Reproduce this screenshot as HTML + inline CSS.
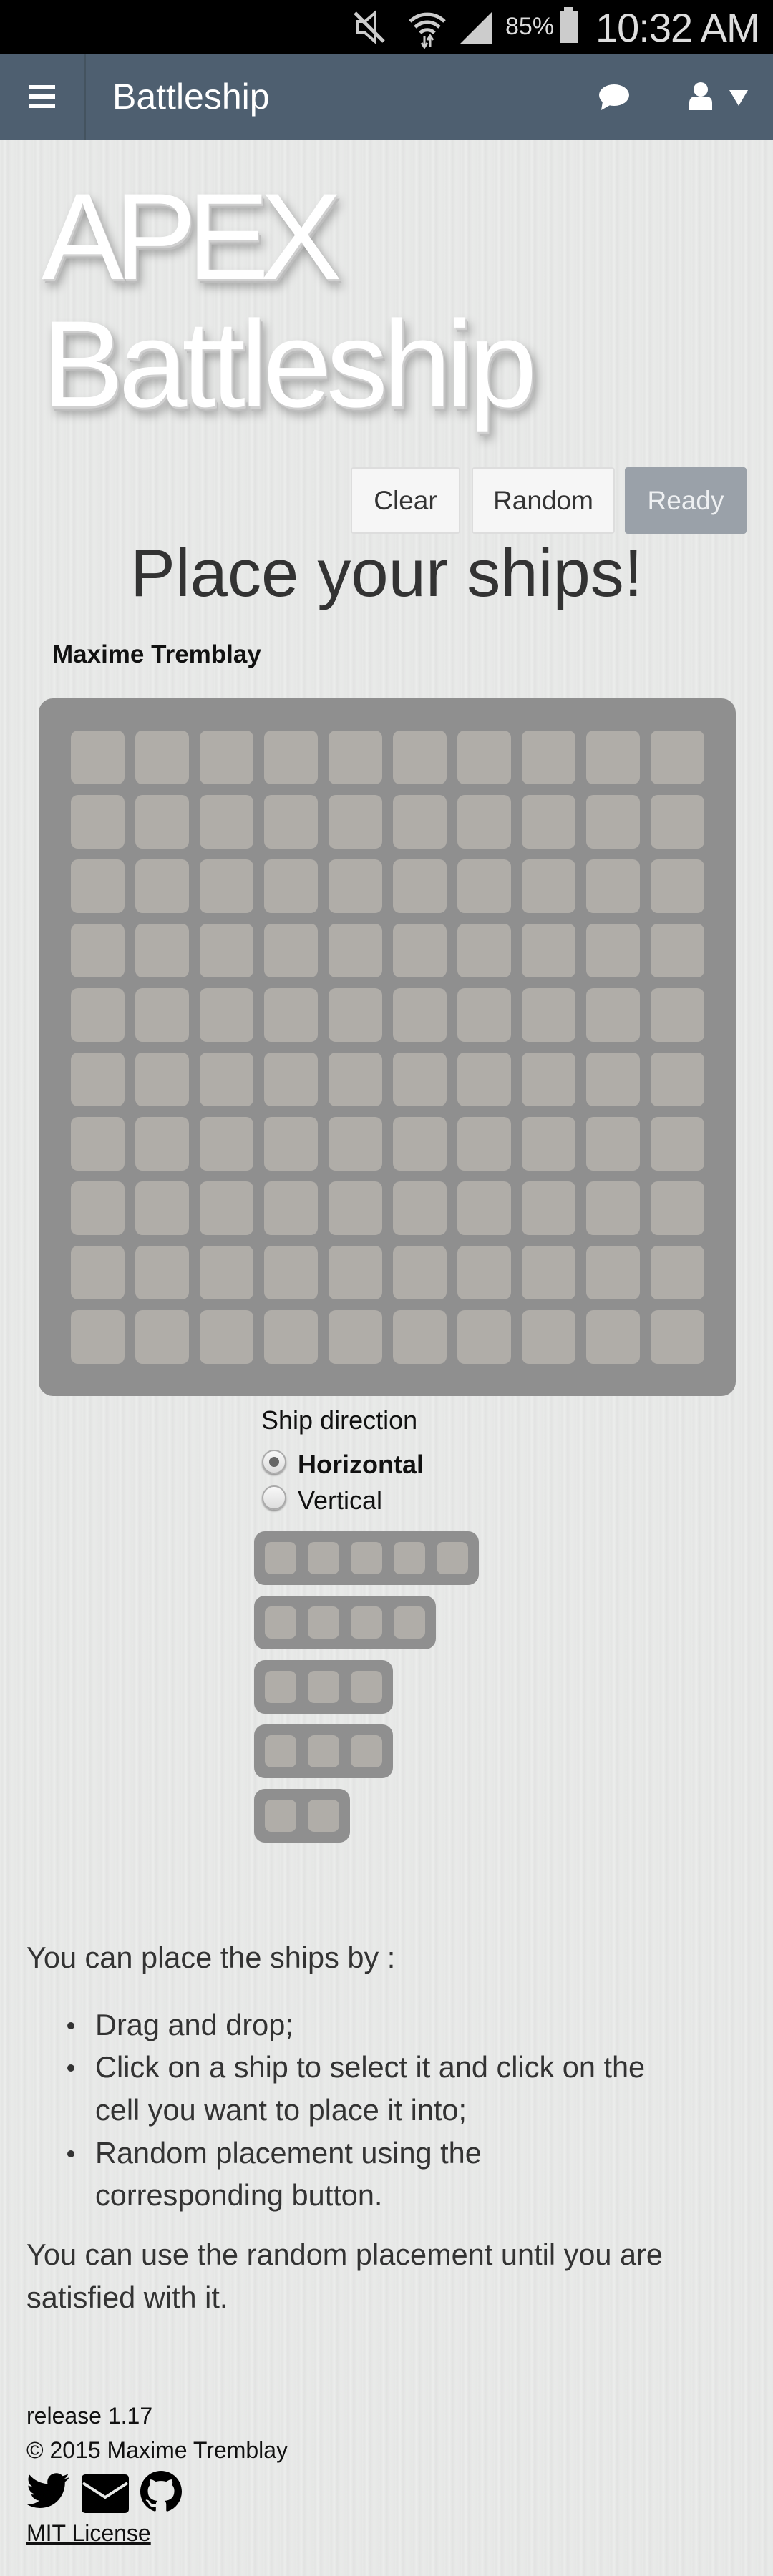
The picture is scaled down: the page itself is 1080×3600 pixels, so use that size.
<!DOCTYPE html>
<html><head><meta charset="utf-8"><style>
*{margin:0;padding:0;box-sizing:border-box}
body{width:1080px;height:3600px;overflow:hidden;font-family:"Liberation Sans",sans-serif;background:#e7e8e7;position:relative;color:#111}
.bg{position:absolute;left:0;top:0;width:1080px;height:3600px;background:repeating-linear-gradient(90deg,#e9eae9 0,#e4e5e4 3px,#ecedec 7px,#e2e3e2 11px,#e9eae9 16px,#e6e7e6 23px)}
.a{position:absolute}
.grid{position:absolute;left:99px;top:1021px;width:885px;height:885px;display:grid;grid-template-columns:repeat(10,75px);grid-template-rows:repeat(10,75px);gap:15px}
.grid div{background:#b0ada8;border-radius:10px}
.ship{position:absolute;left:355px;height:75px;background:#8f8f8f;border-radius:15px}
.sc{position:absolute;top:15px;width:44px;height:45px;background:#b0ada8;border-radius:9px}
.btn{position:absolute;top:653px;height:93px;border:2px solid #ddd;background:#f6f6f6;border-radius:4px;font-size:37px;color:#333;text-align:center;line-height:89px}
.li{position:absolute;left:133px;font-size:41.5px;color:#333;white-space:nowrap}
.dot{position:absolute;left:94px;width:10px;height:10px;border-radius:50%;background:#333}
.p{position:absolute;left:37px;font-size:41.5px;color:#333;white-space:nowrap}
.title{position:absolute;left:58px;color:#fff;font-size:172px;letter-spacing:-7px;line-height:1;text-shadow:2px 3px 0 #d0d0d0,4px 6px 0 #bdbdbd,6px 10px 14px rgba(0,0,0,.35)}
</style></head><body>
<div class="bg"></div>

<div class="a" style="left:0;top:0;width:1080px;height:76px;background:#000">
  <svg class="a" style="left:480px;top:10px" width="70" height="56"><path d="M20 20h10l14-12v40l-14-12H20z" fill="none" stroke="#ccc" stroke-width="4"/><path d="M16 8 L56 48" stroke="#ccc" stroke-width="5"/></svg>
  <svg class="a" style="left:567px;top:8px" width="60" height="62"><path d="M6 22a34 34 0 0 1 48 0M13 30a24 24 0 0 1 34 0M20 38a14 14 0 0 1 20 0" stroke="#ccc" stroke-width="5" fill="none"/><path d="M26 42v16M22 52l4 6 4-6M34 58V42M30 48l4-6 4 6" stroke="#ccc" stroke-width="3" fill="none"/></svg>
  <svg class="a" style="left:640px;top:14px" width="50" height="50"><polygon points="48,2 48,48 2,48" fill="#ccc"/></svg>
  <div class="a" style="left:706px;top:18px;font-size:34px;color:#ddd">85%</div>
  <div class="a" style="left:788px;top:10px;width:12px;height:6px;background:#ccc"></div>
  <div class="a" style="left:782px;top:16px;width:26px;height:44px;background:#ccc"></div>
  <div class="a" style="left:832px;top:6px;font-size:56px;color:#ddd;letter-spacing:-1px">10:32 AM</div>
</div>

<div class="a" style="left:0;top:76px;width:1080px;height:119px;background:#4e5f70">
  <div class="a" style="left:118px;top:0;width:2px;height:119px;background:#44535f"></div>
  <div class="a" style="left:41px;top:43px;width:36px;height:6px;background:#fff"></div>
  <div class="a" style="left:41px;top:56px;width:36px;height:6px;background:#fff"></div>
  <div class="a" style="left:41px;top:69px;width:36px;height:6px;background:#fff"></div>
  <div class="a" style="left:157px;top:30px;font-size:50px;color:#fff">Battleship</div>
  <svg class="a" style="left:836px;top:40px" width="44" height="40"><ellipse cx="22" cy="17" rx="21" ry="15" fill="#fff"/><path d="M6 26 L4 38 L18 30z" fill="#fff"/></svg>
  <svg class="a" style="left:962px;top:38px" width="34" height="40"><circle cx="17" cy="11" r="10" fill="#fff"/><path d="M1 40 V30 Q1 21 10 21 H24 Q33 21 33 30 V40z" fill="#fff"/></svg>
  <svg class="a" style="left:1019px;top:50px" width="26" height="22"><polygon points="0,0 26,0 13,22" fill="#fff"/></svg>
</div>

<div class="title" style="top:245px;letter-spacing:-13px">APEX</div>
<div class="title" style="top:423px">Battleship</div>

<div class="btn" style="left:490px;width:153px">Clear</div>
<div class="btn" style="left:659px;width:200px">Random</div>
<div class="btn" style="left:873px;width:170px;background:#9aa1a9;border-color:#9aa1a9;color:#eef0f2">Ready</div>

<div class="a" style="left:0;width:1080px;top:747px;text-align:center;font-size:94px;color:#333">Place your ships!</div>
<div class="a" style="left:73px;top:895px;font-size:35px;font-weight:bold;color:#111">Maxime Tremblay</div>

<div class="a" style="left:54px;top:976px;width:974px;height:975px;background:#8f8f8f;border-radius:20px"></div>
<div class="grid">
<div></div><div></div><div></div><div></div><div></div><div></div><div></div><div></div><div></div><div></div>
<div></div><div></div><div></div><div></div><div></div><div></div><div></div><div></div><div></div><div></div>
<div></div><div></div><div></div><div></div><div></div><div></div><div></div><div></div><div></div><div></div>
<div></div><div></div><div></div><div></div><div></div><div></div><div></div><div></div><div></div><div></div>
<div></div><div></div><div></div><div></div><div></div><div></div><div></div><div></div><div></div><div></div>
<div></div><div></div><div></div><div></div><div></div><div></div><div></div><div></div><div></div><div></div>
<div></div><div></div><div></div><div></div><div></div><div></div><div></div><div></div><div></div><div></div>
<div></div><div></div><div></div><div></div><div></div><div></div><div></div><div></div><div></div><div></div>
<div></div><div></div><div></div><div></div><div></div><div></div><div></div><div></div><div></div><div></div>
<div></div><div></div><div></div><div></div><div></div><div></div><div></div><div></div><div></div><div></div>
</div>

<div class="a" style="left:365px;top:1964px;font-size:36px;color:#111">Ship direction</div>
<div class="a" style="left:366px;top:2026px;width:34px;height:34px;border-radius:50%;background:linear-gradient(#f8f8f8,#ddd);border:2px solid #aaa;box-shadow:0 2px 2px #999"></div>
<div class="a" style="left:376px;top:2036px;width:14px;height:14px;border-radius:50%;background:#666"></div>
<div class="a" style="left:416px;top:2026px;font-size:36px;font-weight:bold;color:#111">Horizontal</div>
<div class="a" style="left:366px;top:2076px;width:34px;height:34px;border-radius:50%;background:linear-gradient(#f8f8f8,#ddd);border:2px solid #aaa;box-shadow:0 2px 2px #999"></div>
<div class="a" style="left:416px;top:2076px;font-size:36px;color:#111">Vertical</div>

<div class="ship" style="top:2140px;width:314px"><div class="sc" style="left:15px"></div><div class="sc" style="left:75px"></div><div class="sc" style="left:135px"></div><div class="sc" style="left:195px"></div><div class="sc" style="left:255px"></div></div>
<div class="ship" style="top:2230px;width:254px"><div class="sc" style="left:15px"></div><div class="sc" style="left:75px"></div><div class="sc" style="left:135px"></div><div class="sc" style="left:195px"></div></div>
<div class="ship" style="top:2320px;width:194px"><div class="sc" style="left:15px"></div><div class="sc" style="left:75px"></div><div class="sc" style="left:135px"></div></div>
<div class="ship" style="top:2410px;width:194px"><div class="sc" style="left:15px"></div><div class="sc" style="left:75px"></div><div class="sc" style="left:135px"></div></div>
<div class="ship" style="top:2500px;width:134px"><div class="sc" style="left:15px"></div><div class="sc" style="left:75px"></div></div>

<div class="p" style="top:2712px">You can place the ships by :</div>
<div class="dot" style="top:2826px"></div><div class="li" style="top:2806px">Drag and drop;</div>
<div class="dot" style="top:2885px"></div><div class="li" style="top:2865px">Click on a ship to select it and click on the</div>
<div class="li" style="top:2925px">cell you want to place it into;</div>
<div class="dot" style="top:3005px"></div><div class="li" style="top:2985px">Random placement using the</div>
<div class="li" style="top:3044px">corresponding button.</div>
<div class="p" style="top:3127px">You can use the random placement until you are</div>
<div class="p" style="top:3187px">satisfied with it.</div>

<div class="a" style="left:37px;top:3358px;font-size:32px;color:#111">release 1.17</div>
<div class="a" style="left:37px;top:3406px;font-size:32px;color:#111">© 2015 Maxime Tremblay</div>
<svg class="a" style="left:37px;top:3455px" width="60" height="52" viewBox="0 0 24 20"><path d="M24 2.4a9.8 9.8 0 0 1-2.8.8A4.9 4.9 0 0 0 23.3.5a9.8 9.8 0 0 1-3.1 1.2A4.9 4.9 0 0 0 11.8 6.1 14 14 0 0 1 1.7 1 4.9 4.9 0 0 0 3.2 7.6a4.9 4.9 0 0 1-2.2-.6 4.9 4.9 0 0 0 3.9 4.9 4.9 4.9 0 0 1-2.2.1 4.9 4.9 0 0 0 4.6 3.4A9.9 9.9 0 0 1 0 17.4 14 14 0 0 0 7.5 19.6c9.1 0 14-7.5 14-14v-.6A10 10 0 0 0 24 2.4z" fill="#000"/></svg>
<svg class="a" style="left:114px;top:3458px" width="66" height="54" viewBox="0 0 66 54"><rect x="0" y="0" width="66" height="54" rx="5" fill="#000"/><path d="M2 12 L33 32 L64 12" stroke="#e7e8e7" stroke-width="4" fill="none"/></svg>
<svg class="a" style="left:196px;top:3453px" width="58" height="58" viewBox="0 0 16 16"><path fill="#000" d="M8 0C3.58 0 0 3.58 0 8c0 3.54 2.29 6.53 5.47 7.59.4.07.55-.17.55-.38v-1.33c-2.23.48-2.7-1.07-2.7-1.07-.36-.92-.89-1.17-.89-1.17-.73-.5.05-.49.05-.49.8.06 1.23.83 1.23.83.72 1.22 1.87.87 2.33.66.07-.52.28-.87.51-1.07-1.78-.2-3.64-.89-3.64-3.95 0-.87.31-1.59.82-2.15-.08-.2-.36-1.02.08-2.12 0 0 .67-.21 2.2.82.64-.18 1.32-.27 2-.27.68 0 1.36.09 2 .27 1.53-1.04 2.2-.82 2.2-.82.44 1.1.16 1.92.08 2.12.51.56.82 1.27.82 2.15 0 3.07-1.87 3.75-3.65 3.95.29.25.54.73.54 1.48v2.2c0 .21.15.46.55.38A8.01 8.01 0 0 0 16 8c0-4.42-3.58-8-8-8z"/></svg>
<div class="a" style="left:37px;top:3522px;font-size:32px;color:#111;text-decoration:underline">MIT License</div>
</body></html>
